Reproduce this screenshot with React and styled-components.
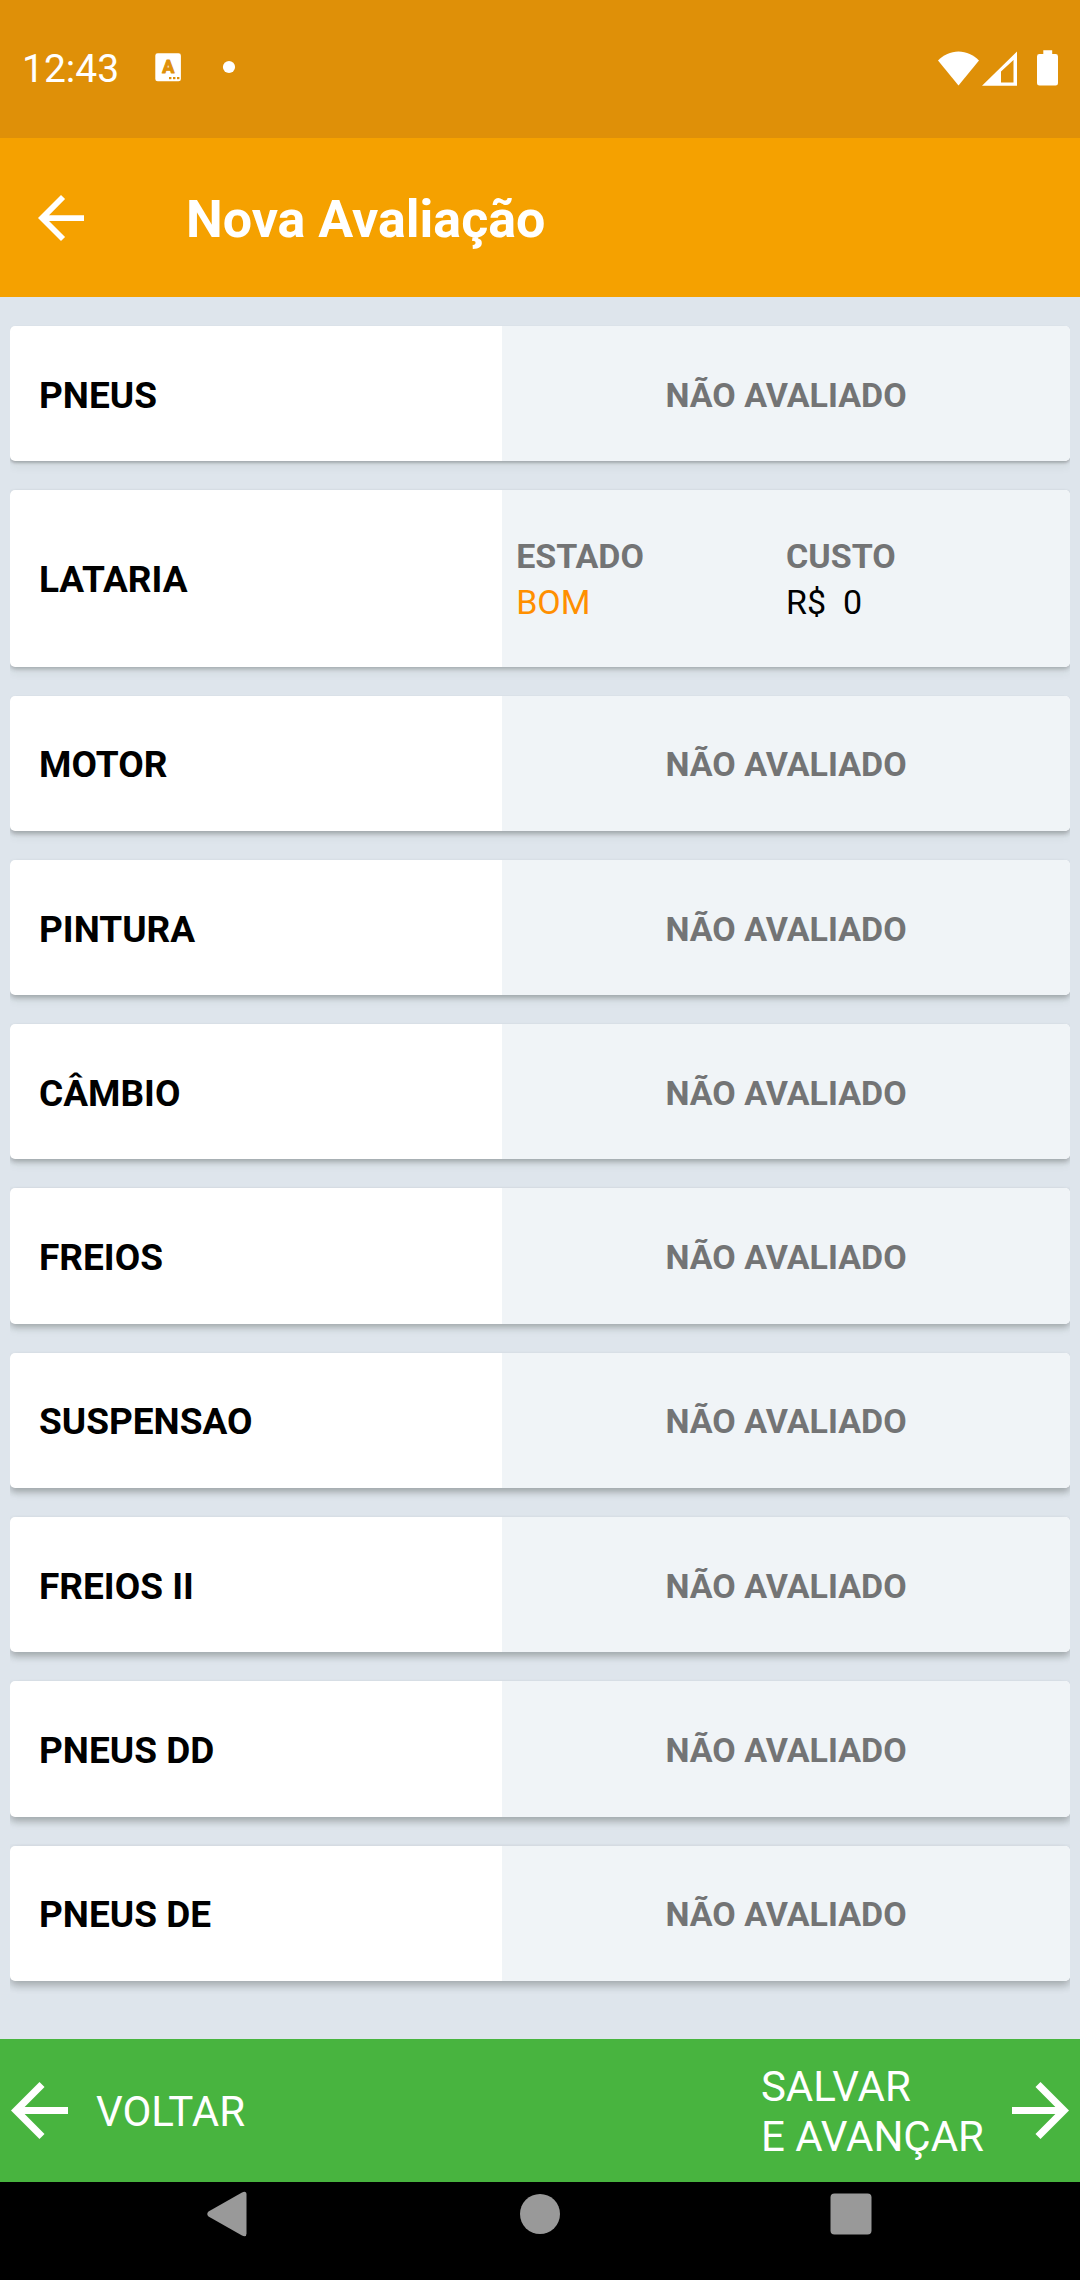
import React from "react";
import styled, { createGlobalStyle } from "styled-components";

const GlobalStyle = createGlobalStyle`
  *, *::before, *::after { box-sizing: border-box; }
  body { margin: 0; background: #dee5ec; }
  button { font: inherit; color: inherit; background: none; border: 0; padding: 0; margin: 0; cursor: pointer; }
  svg { display: block; flex: none; }
`;

const Screen = styled.div`
  display: flex;
  flex-direction: column;
  min-height: 100vh;
  font-family: Roboto, "Noto Sans", sans-serif;
  background: #dee5ec;
  color: #000;
`;

const StatusBar = styled.div`
  display: flex;
  align-items: center;
  justify-content: space-between;
  min-height: 138px;
  padding: 0 22px;
  background: #df9008;
  color: #fff;
`;

const StatusGroup = styled.div`
  display: flex;
  align-items: center;
`;

const Clock = styled.time`
  width: 132px;
  font-size: 39px;
  line-height: 44px;
`;

const AppBar = styled.header`
  display: flex;
  align-items: center;
  min-height: 159px;
  padding: 0 38px;
  gap: 102px;
  background: #f5a100;
  color: #fff;
`;

const Title = styled.h1`
  margin: 0;
  padding-top: 4px;
  font-size: 52px;
  line-height: 60px;
  font-weight: 700;
`;

const List = styled.ul`
  flex: 1;
  display: flex;
  flex-direction: column;
  gap: 29px;
  margin: 0;
  padding: 29px 10px 58px;
  list-style: none;
`;

const Card = styled.li`
  flex: 1 0 auto;
  display: grid;
  grid-template-columns: 13fr 15fr;
  border-radius: 5px;
  background: #fff;
  box-shadow:
    0 ${(p) => 2 + Math.round(p.$depth / 4)}px ${(p) => 3 + Math.round(p.$depth / 2)}px rgba(0, 0, 0, 0.24),
    0 6px 10px rgba(40, 70, 40, 0.06);
  clip-path: inset(-2px 0 -20px 0);
`;

const Name = styled.h2`
  align-self: center;
  margin: 0;
  padding: 4px 29px 0;
  font-size: 37px;
  line-height: 44px;
  font-weight: 700;
`;

const Panel = styled.div`
  display: grid;
  align-items: center;
  min-height: 135px;
  padding: 43px 14px 41px;
  border-radius: 0 5px 5px 0;
  background: #f0f4f7;
  font-size: 34px;
  line-height: 46px;
`;

const Pending = styled.span`
  text-align: center;
  font-weight: 700;
  color: #737475;
`;

const Result = styled.dl`
  display: grid;
  grid-template-columns: 1fr 1fr;
  margin: 0;
`;

const Label = styled.dt`
  font-weight: 700;
  color: #737475;
`;

const Value = styled.dd`
  margin: 0;
  white-space: pre;
  color: ${(p) => (p.$accent ? "#ff8f00" : "#000")};
`;

const Footer = styled.footer`
  display: flex;
  align-items: center;
  justify-content: space-between;
  min-height: 143px;
  padding: 0 11px;
  background: #48b43f;
  color: #fff;
`;

const FooterButton = styled.button`
  display: flex;
  align-items: center;
  gap: 28px;
  text-align: left;
`;

const FooterText = styled.span`
  padding-top: 2px;
  font-size: 42px;
  line-height: 50px;
`;

const SystemNav = styled.nav`
  display: grid;
  grid-template-columns: repeat(3, 1fr);
  justify-items: center;
  align-items: center;
  min-height: 98px;
  padding: 0 73px 34px;
  background: #000;
`;

const ArrowIcon = ({ size, right }) => (
  <svg width={size} height={size} viewBox="4 4 16 16" fill="#fff" aria-hidden="true">
    <path
      d={
        right
          ? "M12 4l-1.41 1.41L16.17 11H4v2h12.17l-5.58 5.59L12 20l8-8z"
          : "M20 11H7.83l5.59-5.59L12 4l-8 8 8 8 1.41-1.41L7.83 13H20z"
      }
    />
  </svg>
);

const StatusNotices = () => (
  <svg width="84" height="38" viewBox="154 50 84 38" aria-hidden="true">
    <rect x="155.3" y="53.3" width="25.6" height="28" rx="2.4" fill="#fff" />
    <text
      x="168.3"
      y="73.2"
      textAnchor="middle"
      fontFamily="Roboto, sans-serif"
      fontWeight="700"
      fontSize="18"
      fill="#df9008"
      stroke="#df9008"
      strokeWidth="1"
      strokeLinejoin="round"
    >
      A
    </text>
    <g fill="#df9008">
      <rect x="169" y="77" width="2.4" height="2.2" />
      <rect x="173" y="77" width="2.4" height="2.2" />
      <rect x="177" y="77" width="2.4" height="2.2" />
    </g>
    <circle cx="229" cy="67" r="6.1" fill="#fff" />
  </svg>
);

const StatusSignals = () => (
  <svg width="120" height="38" viewBox="938 49 120 38" fill="#fff" aria-hidden="true">
    <path d="M958.5 84.5L938 59.5C943.5 54 950.500 50.500 958.500 50.500S973.500 54 979 59.500Z" />
    <path fillRule="evenodd" d="M982 84.700L1017 50.500V84.700ZM1001 70.500V81.500H1013.500V59Z" />
    <path d="M1043.300 49.300H1052.200V53H1055.600Q1058 53 1058 55.400V82.200Q1058 84.600 1055.600 84.600H1039.400Q1037 84.600 1037 82.200V55.400Q1037 53 1039.400 53H1043.300Z" />
  </svg>
);

const NavIcon = ({ children }) => (
  <svg width="46" height="46" viewBox="0 0 46 46" fill="#999" aria-hidden="true">
    {children}
  </svg>
);

const items = [
  { name: "PNEUS" },
  { name: "LATARIA", state: "BOM", cost: 0 },
  { name: "MOTOR" },
  { name: "PINTURA" },
  { name: "CÂMBIO" },
  { name: "FREIOS" },
  { name: "SUSPENSAO" },
  { name: "FREIOS II" },
  { name: "PNEUS DD" },
  { name: "PNEUS DE" },
];

export default function App() {
  return (
    <Screen>
      <GlobalStyle />
      <StatusBar>
        <StatusGroup>
          <Clock>12:43</Clock>
          <StatusNotices />
        </StatusGroup>
        <StatusSignals />
      </StatusBar>
      <AppBar>
        <button type="button" aria-label="Voltar">
          <ArrowIcon size={46} />
        </button>
        <Title>Nova Avaliação</Title>
      </AppBar>
      <List>
        {items.map((item, index) => (
          <Card key={item.name} $depth={index}>
            <Name>{item.name}</Name>
            <Panel>
              {item.state ? (
                <Result>
                  <div>
                    <Label>ESTADO</Label>
                    <Value $accent>{item.state}</Value>
                  </div>
                  <div>
                    <Label>CUSTO</Label>
                    <Value>{`R$  ${item.cost}`}</Value>
                  </div>
                </Result>
              ) : (
                <Pending>NÃO AVALIADO</Pending>
              )}
            </Panel>
          </Card>
        ))}
      </List>
      <Footer>
        <FooterButton type="button">
          <ArrowIcon size={57} />
          <FooterText>VOLTAR</FooterText>
        </FooterButton>
        <FooterButton type="button">
          <FooterText>
            SALVAR
            <br />E AVANÇAR
          </FooterText>
          <ArrowIcon size={57} right />
        </FooterButton>
      </Footer>
      <SystemNav>
        <button type="button" aria-label="Anterior">
          <NavIcon>
            <path d="M2.500 20.500L36 1.400Q40.500 -0.500 40.500 3.500V42.500Q40.500 46.500 36 44.600L2.500 25.500Q0 23 2.500 20.500Z" />
          </NavIcon>
        </button>
        <button type="button" aria-label="Início">
          <NavIcon>
            <circle cx="23" cy="23" r="20" />
          </NavIcon>
        </button>
        <button type="button" aria-label="Recentes">
          <NavIcon>
            <rect x="2.500" y="2.500" width="41" height="41" rx="4" />
          </NavIcon>
        </button>
      </SystemNav>
    </Screen>
  );
}
